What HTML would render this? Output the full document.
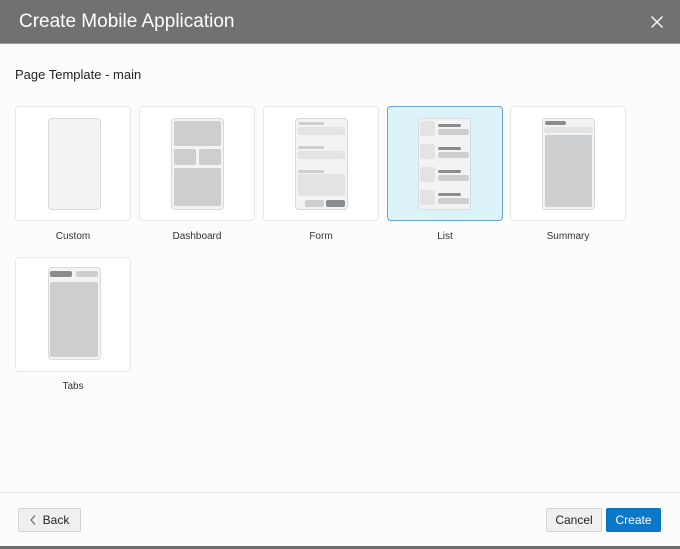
<!DOCTYPE html>
<html><head><style>
*{margin:0;padding:0;box-sizing:border-box}
body{width:680px;height:549px;background:#fcfcfd;font-family:"Liberation Sans",sans-serif;position:relative;overflow:hidden}
.a{position:absolute}
.hdr{left:0;top:0;width:680px;height:44px;background:#717171;border-bottom:1px solid #9a9a9a}
.card{position:absolute;width:116px;height:115px;background:#fff;border:1px solid #e8e8e8;border-radius:4px}
.sel{background:#dcf3fa;border-color:#6aa3d8}
.lbl{position:absolute;width:116px;text-align:center;font-size:10px;color:#333}
.ph{position:absolute;width:53px;height:92px;background:#f3f3f4;border:1px solid #d9d9db;border-radius:4px}
.g{position:absolute;background:#cdcecf;border-radius:2px}
.l{position:absolute;background:#e3e3e4;border-radius:2px}
.d{position:absolute;background:#8a8d90;border-radius:2px}
.btn{position:absolute;height:24px;border:1px solid #d4d4d4;border-radius:2px;background:#f0f0f0;font-size:12px;color:#222;display:flex;align-items:center;justify-content:center}
</style></head><body>
<div class="a hdr"></div>
<div class="a" style="left:19px;top:11px;font-size:19px;color:#fff">Create Mobile Application</div>
<svg class="a" style="left:651px;top:16px" width="12" height="12"><path d="M0.5 0.5L11.5 11.5M11.5 0.5L0.5 11.5" stroke="#fff" stroke-width="1.3"/></svg>
<div class="a" style="left:15px;top:67px;font-size:13px;color:#222">Page Template - main</div>

<div class="card" style="left:15px;top:106px"></div>
<div class="ph" style="left:48px;top:118px"></div>
<div class="lbl" style="left:15px;top:231px">Custom</div>

<div class="card" style="left:139px;top:106px"></div>
<div class="ph" style="left:171px;top:118px"></div>
<div class="g" style="left:174px;top:121px;width:47px;height:25px"></div>
<div class="g" style="left:174px;top:149px;width:22px;height:16px"></div>
<div class="g" style="left:199px;top:149px;width:22px;height:16px"></div>
<div class="g" style="left:174px;top:168px;width:47px;height:38px"></div>
<div class="lbl" style="left:139px;top:231px">Dashboard</div>

<div class="card" style="left:263px;top:106px"></div>
<div class="ph" style="left:295px;top:118px"></div>
<div class="g" style="left:298px;top:122px;width:26px;height:3px"></div>
<div class="l" style="left:298px;top:127px;width:47px;height:8px"></div>
<div class="g" style="left:298px;top:146px;width:26px;height:3px"></div>
<div class="l" style="left:298px;top:151px;width:47px;height:8px"></div>
<div class="g" style="left:298px;top:170px;width:26px;height:3px"></div>
<div class="l" style="left:298px;top:174px;width:47px;height:22px"></div>
<div class="g" style="left:305px;top:200px;width:19px;height:7px"></div>
<div class="d" style="left:326px;top:200px;width:19px;height:7px"></div>
<div class="lbl" style="left:263px;top:231px">Form</div>

<div class="card sel" style="left:387px;top:106px"></div>
<div class="ph" style="left:418px;top:118px"></div>
<div class="l" style="left:420px;top:121px;width:15px;height:15px"></div>
<div class="d" style="left:438px;top:124px;width:23px;height:3px"></div>
<div class="g" style="left:438px;top:129px;width:31px;height:6px"></div>
<div class="l" style="left:420px;top:144px;width:15px;height:15px"></div>
<div class="d" style="left:438px;top:147px;width:23px;height:3px"></div>
<div class="g" style="left:438px;top:152px;width:31px;height:6px"></div>
<div class="l" style="left:420px;top:167px;width:15px;height:15px"></div>
<div class="d" style="left:438px;top:170px;width:23px;height:3px"></div>
<div class="g" style="left:438px;top:175px;width:31px;height:6px"></div>
<div class="l" style="left:420px;top:190px;width:15px;height:15px"></div>
<div class="d" style="left:438px;top:193px;width:23px;height:3px"></div>
<div class="g" style="left:438px;top:198px;width:31px;height:6px"></div>
<div class="lbl" style="left:387px;top:231px">List</div>

<div class="card" style="left:510px;top:106px"></div>
<div class="ph" style="left:542px;top:118px"></div>
<div class="d" style="left:545px;top:121px;width:21px;height:4px"></div>
<div class="l" style="left:544px;top:127px;width:49px;height:6px"></div>
<div class="g" style="left:545px;top:135px;width:47px;height:72px"></div>
<div class="lbl" style="left:510px;top:231px">Summary</div>

<div class="card" style="left:15px;top:257px"></div>
<div class="ph" style="left:48px;top:267px;height:93px"></div>
<div class="d" style="left:50px;top:271px;width:22px;height:6px"></div>
<div class="g" style="left:76px;top:271px;width:22px;height:6px"></div>
<div class="g" style="left:50px;top:282px;width:48px;height:75px"></div>
<div class="lbl" style="left:15px;top:381px">Tabs</div>

<div class="a" style="left:0;top:492px;width:680px;height:1px;background:#e2e2e2"></div>
<div class="btn" style="left:18px;top:508px;width:63px"><svg width="6" height="10" style="margin-right:7px"><path d="M5 0.5L1 5L5 9.5" fill="none" stroke="#666" stroke-width="1.2"/></svg>Back</div>
<div class="btn" style="left:546px;top:508px;width:56px">Cancel</div>
<div class="btn" style="left:606px;top:508px;width:55px;background:#0b78c9;border-color:#0b6fb9;color:#fff">Create</div>
<div class="a" style="left:0;top:546px;width:680px;height:3px;background:#6e6e6e"></div>
</body></html>
